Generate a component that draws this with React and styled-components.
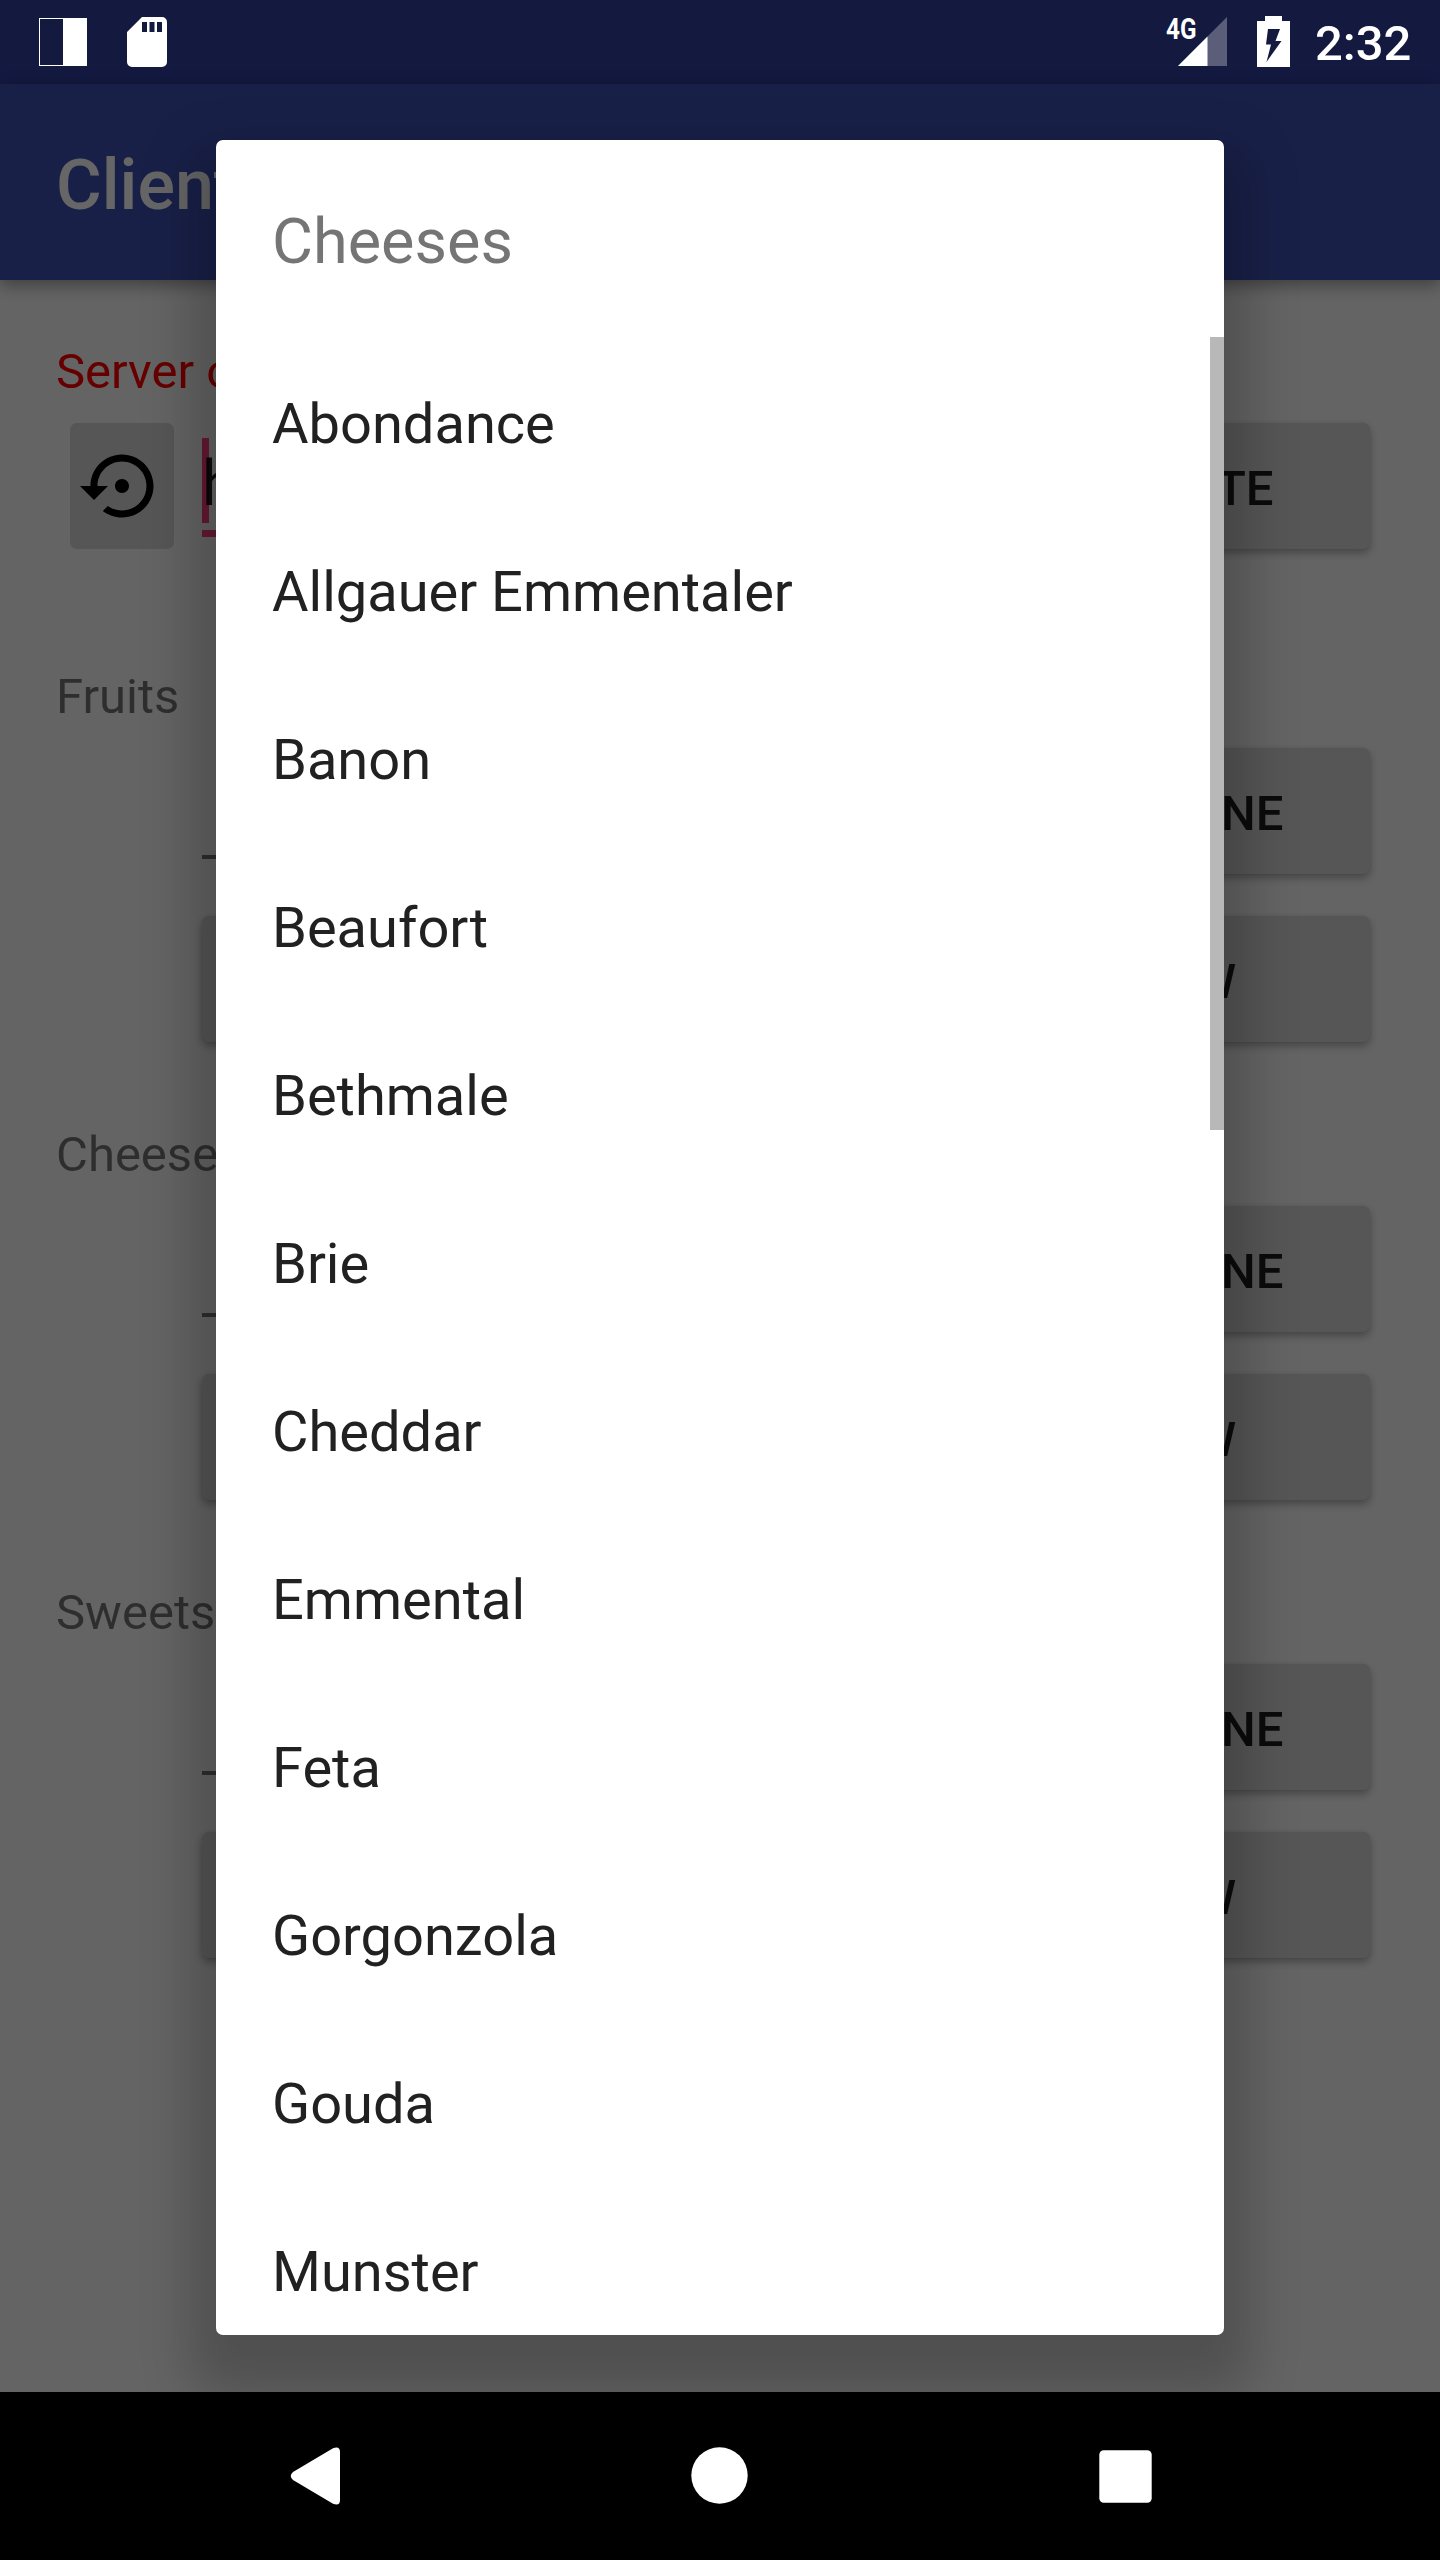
import React from "react";
import styled, { createGlobalStyle } from "styled-components";

const GlobalStyle = createGlobalStyle`
  *, *::before, *::after { box-sizing: border-box; }
  body { margin: 0; background: #000; }
`;

const Screen = styled.div`
  position: relative;
  display: flex;
  flex-direction: column;
  width: 1440px;
  height: 2560px;
  overflow: hidden;
  font-family: Roboto, "Noto Sans", sans-serif;
  font-size: 49px;
  color: rgba(0, 0, 0, 0.87);
  background: #000;
`;

const Activity = styled.div`
  display: flex;
  flex-direction: column;
  height: 2392px;
  background: #fafafa;
`;

const StatusBackground = styled.div`
  flex: none;
  height: 84px;
  background: #303f9f;
`;

const Toolbar = styled.header`
  flex: none;
  display: flex;
  align-items: center;
  height: 196px;
  padding: 6px 56px 0;
  background: #3f51b5;
  box-shadow: 0 5px 16px rgba(0, 0, 0, 0.38);
  color: #fff;
  font-size: 70px;
  font-weight: 500;
`;

const Content = styled.main`
  display: flex;
  flex-direction: column;
  gap: 56px;
  padding: 56px 56px 0 56px;
`;

const Section = styled.section`
  display: flex;
  flex-direction: column;
  padding-bottom: ${(p) => p.$bottom || 0}px;
`;

const Label = styled.div`
  height: 66px;
  padding-top: 5px;
  line-height: 61px;
  color: ${(p) => (p.$error ? "#f00" : "rgba(0, 0, 0, 0.54)")};
`;

const Row = styled.div`
  display: flex;
  align-items: center;
  gap: 28px;
  height: 168px;
  padding: 0 14px 0 ${(p) => (p.$indent ? 146 : 14)}px;
`;

const Button = styled.button`
  flex: ${(p) => (p.$fill ? "1" : "none")};
  width: ${(p) => (p.$fill ? "auto" : "385px")};
  height: 126px;
  padding: 4px 0 0 ${(p) => p.$inset || 0}px;
  border: 0;
  border-radius: 7px;
  background: #d6d6d6;
  box-shadow: 0 4px 9px rgba(0, 0, 0, 0.3), 0 0 3px rgba(0, 0, 0, 0.06);
  color: rgba(0, 0, 0, 0.87);
  font: 500 49px Roboto, sans-serif;
`;

const IconButton = styled.button`
  flex: none;
  display: flex;
  align-items: center;
  justify-content: center;
  width: 104px;
  height: 126px;
  padding: 0;
  border: 0;
  border-radius: 7px;
  background: #d6d6d6;
`;

const Field = styled.div`
  flex: 1;
  align-self: stretch;
  display: flex;
  align-items: center;
  height: ${(p) => (p.$focused ? 135 : 132)}px;
  border-bottom: ${(p) => (p.$focused ? "7px solid #ff4081" : "4px solid rgba(0, 0, 0, 0.54)")};
  font-size: 63px;
`;

const Cursor = styled.span`
  width: 7px;
  height: 85px;
  margin: 29px -7px 0 0;
  background: #ff4081;
`;

const FieldText = styled.span`
  position: relative;
  padding-top: 35px;
  line-height: 74px;
`;

const Scrim = styled.div`
  position: absolute;
  inset: 0 0 168px;
  display: flex;
  justify-content: center;
  padding: 140px 0 57px;
  background: rgba(0, 0, 0, 0.6);
  overflow: hidden;
`;

const Dialog = styled.div`
  position: relative;
  display: flex;
  flex-direction: column;
  width: 1008px;
  height: 2195px;
  border-radius: 7px;
  background: #fff;
  box-shadow: 0 32px 50px 26px rgba(0, 0, 0, 0.205);
`;

const DialogTitle = styled.h1`
  flex: none;
  height: 197px;
  margin: 0;
  padding: 63px 56px 0;
  color: #757575;
  font-size: 63px;
  font-weight: 400;
  line-height: 77px;
`;

const List = styled.ul`
  flex: 1;
  min-height: 0;
  margin: 0;
  padding: 3px 0 0;
  overflow: hidden;
  list-style: none;
`;

const Item = styled.li`
  height: 168px;
  padding-left: 56px;
  color: #212121;
  font-size: 56px;
  line-height: 168px;
`;

const ScrollThumb = styled.div`
  position: absolute;
  top: 197px;
  right: 0;
  width: 14px;
  height: 793px;
  background: #b8b8b8;
`;

const StatusBar = styled.div`
  position: absolute;
  inset: 0 0 auto;
  display: flex;
  align-items: flex-start;
  height: 84px;
  padding: 16px 28px 0 39px;
  color: #fff;
`;

const SplitIcon = styled.span`
  width: 48px;
  height: 48px;
  margin: 2px 40px 0 0;
  border: 1px solid #fff;
  border-right-width: 24px;
`;

const Spacer = styled.span`
  flex: 1;
`;

const Signal = styled.span`
  position: relative;
  width: 61px;
  height: 51px;
  margin-right: 30px;
`;

const Network = styled.span`
  position: absolute;
  top: -3px;
  left: 0;
  font-size: 30px;
  font-weight: 700;
  line-height: 31px;
  transform: scaleX(0.81);
  transform-origin: left;
`;

const Clock = styled.time`
  width: 97px;
  margin-left: 25px;
  font-weight: 500;
  line-height: 55px;
`;

const NavBar = styled.nav`
  flex: none;
  display: flex;
  align-items: center;
  justify-content: space-between;
  height: 168px;
  padding: 0 288px 0 290px;
`;

const sections = ["Fruits", "Cheeses", "Sweets"];

const cheeses = [
  "Abondance", "Allgauer Emmentaler", "Banon", "Beaufort", "Bethmale", "Brie",
  "Cheddar", "Emmental", "Feta", "Gorgonzola", "Gouda", "Munster",
];

const RestoreIcon = () => (
  <svg width="84" height="84" viewBox="0 0 24 24">
    <path d="M14 12c0-1.1-.9-2-2-2s-2 .9-2 2 .9 2 2 2 2-.9 2-2zm-2-9c-4.97 0-9 4.03-9 9H0l4 4 4-4H5c0-3.87 3.13-7 7-7s7 3.13 7 7-3.13 7-7 7c-1.51 0-2.91-.49-4.06-1.3l-1.42 1.44C8.04 20.3 9.94 21 12 21c4.97 0 9-4.03 9-9s-4.03-9-9-9z" />
  </svg>
);

const SdCardIcon = () => (
  <svg width="40" height="51" viewBox="0 0 40 51">
    <path fill="#fff" fillRule="evenodd" d="M15 1H35a5 5 0 0 1 5 5V46a5 5 0 0 1-5 5H5a5 5 0 0 1-5-5V16zM15 6v10h5V6zM22.500 6v10h5V6zM30 6v10h5V6z" />
  </svg>
);

const SignalIcon = () => (
  <svg width="61" height="51" viewBox="0 0 61 51">
    <path fill="#fff" fillOpacity="0.3" d="M61 1V50H12z" />
    <path fill="#fff" d="M41.500 20.500V50H12z" />
  </svg>
);

const BatteryIcon = () => (
  <svg width="33" height="51" viewBox="0 0 33 51">
    <path fill="#fff" fillRule="evenodd" d="M8 0H25V5H33V51H0V5H8zM11 13L9 28.500H14L9.500 46L24.500 25H18.500L23 13z" />
  </svg>
);

const BackIcon = () => (
  <svg width="50" height="58" viewBox="0 0 50 58">
    <path fill="#fff" d="M43 1.200Q50-1.500 50 5V53Q50 59.500 43 56.800L3 33Q-1.500 29 3 25z" />
  </svg>
);

const HomeIcon = () => (
  <svg width="58" height="58" viewBox="0 0 58 58">
    <circle cx="28.500" cy="28.500" r="28.200" fill="#fff" />
  </svg>
);

const RecentsIcon = () => (
  <svg width="53" height="53" viewBox="0 0 53 53">
    <rect x="0.300" y="0.300" width="52.400" height="52.400" rx="4.500" fill="#fff" />
  </svg>
);

export default function App() {
  return (
    <Screen>
      <GlobalStyle />
      <Activity>
        <StatusBackground />
        <Toolbar>Client</Toolbar>
        <Content>
          <Section $bottom={35}>
            <Label $error>Server offline</Label>
            <Row>
              <IconButton aria-label="Restore"><RestoreIcon /></IconButton>
              <Field $focused>
                <Cursor />
                <FieldText>h</FieldText>
              </Field>
              <Button $inset={10}>UPDATE</Button>
            </Row>
          </Section>
          {sections.map((name) => (
            <Section key={name}>
              <Label>{name}</Label>
              <Row $indent>
                <Field />
                <Button $inset={7}>ADD ONE</Button>
              </Row>
              <Row $indent>
                <Button $fill />
                <Button $inset={1}>VIEW</Button>
              </Row>
            </Section>
          ))}
        </Content>
      </Activity>
      <NavBar>
        <BackIcon />
        <HomeIcon />
        <RecentsIcon />
      </NavBar>
      <Scrim>
        <Dialog role="dialog">
          <DialogTitle>Cheeses</DialogTitle>
          <List>
            {cheeses.map((name) => <Item key={name}>{name}</Item>)}
          </List>
          <ScrollThumb />
        </Dialog>
      </Scrim>
      <StatusBar>
        <SplitIcon />
        <SdCardIcon />
        <Spacer />
        <Signal>
          <SignalIcon />
          <Network>4G</Network>
        </Signal>
        <BatteryIcon />
        <Clock>2:32</Clock>
      </StatusBar>
    </Screen>
  );
}
